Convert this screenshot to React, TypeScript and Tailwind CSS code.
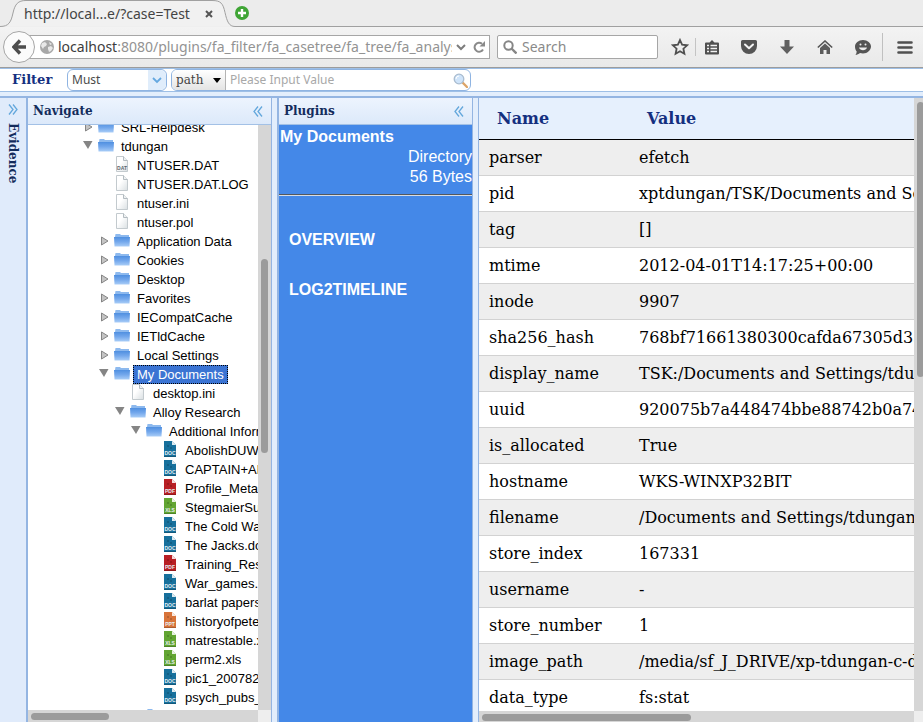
import { useEffect, useRef } from 'react';
import type { ReactNode } from 'react';

type NodeKind = 'closed' | 'open' | 'file' | 'dat' | 'doc' | 'pdf' | 'xls' | 'ppt';

const nodes: { label: string; kind: NodeKind; depth: number; selected?: boolean }[] = [
  { label: 'SRL-Helpdesk', kind: 'closed', depth: 3 },
  { label: 'tdungan', kind: 'open', depth: 3 },
  { label: 'NTUSER.DAT', kind: 'dat', depth: 4 },
  { label: 'NTUSER.DAT.LOG', kind: 'file', depth: 4 },
  { label: 'ntuser.ini', kind: 'file', depth: 4 },
  { label: 'ntuser.pol', kind: 'file', depth: 4 },
  { label: 'Application Data', kind: 'closed', depth: 4 },
  { label: 'Cookies', kind: 'closed', depth: 4 },
  { label: 'Desktop', kind: 'closed', depth: 4 },
  { label: 'Favorites', kind: 'closed', depth: 4 },
  { label: 'IECompatCache', kind: 'closed', depth: 4 },
  { label: 'IETldCache', kind: 'closed', depth: 4 },
  { label: 'Local Settings', kind: 'closed', depth: 4 },
  { label: 'My Documents', kind: 'open', depth: 4, selected: true },
  { label: 'desktop.ini', kind: 'file', depth: 5 },
  { label: 'Alloy Research', kind: 'open', depth: 5 },
  { label: 'Additional Information', kind: 'open', depth: 6 },
  { label: 'AbolishDUW.doc', kind: 'doc', depth: 7 },
  { label: 'CAPTAIN+AMERICA.doc', kind: 'doc', depth: 7 },
  { label: 'Profile_Metals.pdf', kind: 'pdf', depth: 7 },
  { label: 'StegmaierSummary.xls', kind: 'xls', depth: 7 },
  { label: 'The Cold War.doc', kind: 'doc', depth: 7 },
  { label: 'The Jacks.doc', kind: 'doc', depth: 7 },
  { label: 'Training_Results.pdf', kind: 'pdf', depth: 7 },
  { label: 'War_games.doc', kind: 'doc', depth: 7 },
  { label: 'barlat papers.doc', kind: 'doc', depth: 7 },
  { label: 'historyofpeter.ppt', kind: 'ppt', depth: 7 },
  { label: 'matrestable.xls', kind: 'xls', depth: 7 },
  { label: 'perm2.xls', kind: 'xls', depth: 7 },
  { label: 'pic1_200782.doc', kind: 'doc', depth: 7 },
  { label: 'psych_pubs_list.doc', kind: 'doc', depth: 7 },
  { label: 'Archive', kind: 'closed', depth: 6 },
];

const attributes = [
  ['parser', 'efetch'],
  ['pid', 'xptdungan/TSK/Documents and Settings/tdungan/My Documents'],
  ['tag', '[]'],
  ['mtime', '2012-04-01T14:17:25+00:00'],
  ['inode', '9907'],
  ['sha256_hash', '768bf71661380300cafda67305d33a1e9f0c27b4'],
  ['display_name', 'TSK:/Documents and Settings/tdungan/My Documents'],
  ['uuid', '920075b7a448474bbe88742b0a74e1c6'],
  ['is_allocated', 'True'],
  ['hostname', 'WKS-WINXP32BIT'],
  ['filename', '/Documents and Settings/tdungan/My Documents'],
  ['store_index', '167331'],
  ['username', '-'],
  ['store_number', '1'],
  ['image_path', '/media/sf_J_DRIVE/xp-tdungan-c-drive/xp-tdungan-c-drive.E01'],
  ['data_type', 'fs:stat'],
];

const fileColors: Record<string, string> = {
  doc: '#17709c',
  pdf: '#b81f24',
  xls: '#62a532',
  ppt: '#d8743a',
};

function FolderIcon() {
  return (
    <svg width="16" height="16" viewBox="0 0 16 16">
      <defs>
        <linearGradient id="folder" x1="0" y1="0" x2="0" y2="1">
          <stop offset="0" stopColor="#4f8fe0" />
          <stop offset="0.5" stopColor="#74a8ec" />
          <stop offset="1" stopColor="#a9cdf7" />
        </linearGradient>
      </defs>
      <path d="M1 5l.5-3H6l1 1h8v3H1z" fill="#8db9ee" />
      <path d="M0 5h16l-.5 9.500H.5z" fill="url(#folder)" />
    </svg>
  );
}

function FileIcon({ kind }: { kind: NodeKind }) {
  const color = fileColors[kind];
  if (color) {
    return (
      <svg width="12" height="16" viewBox="0 0 12 16">
        <path d="M0 0h8l4 4v12H0z" fill={color} />
        <path d="M8 0v4h4z" fill="#ffffff" opacity="0.85" />
        <path d="M3 4h2v2H3zM6 6h2v2H6z" fill="#000000" opacity="0.15" />
        <path d="M0 15h12v1H0z" fill="#000000" opacity="0.2" />
        <text x="6" y="14" textAnchor="middle" fontSize="5" fontWeight="bold" fill="#e6eef2" fontFamily="Liberation Sans, sans-serif">
          {kind.toUpperCase()}
        </text>
      </svg>
    );
  }
  return (
    <svg width="12" height="16" viewBox="0 0 12 16">
      <defs>
        <linearGradient id="paper" x1="0" y1="0" x2="1" y2="1">
          <stop offset="0.4" stopColor="#ffffff" />
          <stop offset="1" stopColor="#d9dfe2" />
        </linearGradient>
      </defs>
      <path d="M.5.5h7l4 4v11H.5z" fill="url(#paper)" stroke="#c3cace" />
      <path d="M7.500.5v4h4" fill="#eef1f2" stroke="#b3bbc0" />
      {kind === 'dat' && (
        <text x="6" y="14" textAnchor="middle" fontSize="5" fontWeight="bold" fill="#5b666c" fontFamily="Liberation Sans, sans-serif">
          DAT
        </text>
      )}
    </svg>
  );
}

function Twisty({ kind }: { kind: NodeKind }) {
  if (kind === 'open') {
    return (
      <svg width="12" height="16" viewBox="0 0 12 16">
        <path d="M1 4h9.500L6 12z" fill="#858585" />
      </svg>
    );
  }
  if (kind === 'closed') {
    return (
      <svg width="12" height="16" viewBox="0 0 12 16">
        <path d="M3.500 5v8L10 9z" fill="#c4c4c4" stroke="#858585" />
      </svg>
    );
  }
  return null;
}

function Chevrons({ flip = false }: { flip?: boolean }) {
  return (
    <svg width="10" height="11" viewBox="0 0 10 11" className={flip ? 'rotate-180' : ''}>
      <path d="M5 .5l-4 5 4 5M9 .5l-4 5 4 5" fill="none" stroke="#63a7dc" strokeWidth="1.3" />
    </svg>
  );
}

function PanelHeader({ title }: { title: string }) {
  return (
    <div className="flex h-[27px] shrink-0 items-center justify-between border-b border-[#a3c1e6] bg-linear-to-b from-[#edf4fe] to-[#dce9fa] pr-2 pl-[5px]">
      <h2 className="font-['DejaVu_Serif',serif] text-xs font-bold text-[#132c5c]">{title}</h2>
      <button type="button" aria-label={`Collapse ${title}`}>
        <Chevrons />
      </button>
    </div>
  );
}

function ToolbarButton({ label, children }: { label: string; children: ReactNode }) {
  return (
    <button type="button" aria-label={label} className="flex w-[38px] items-center justify-center text-[#555555]">
      {children}
    </button>
  );
}

function BrowserChrome() {
  return (
    <header className="shrink-0 bg-[#ececec] font-['Noto_Sans',sans-serif]">
      <div className="flex h-[27px] items-stretch">
        <div className="relative flex w-[235px] items-center">
          <svg className="absolute inset-0" width="235" height="27" viewBox="0 0 235 27">
            <path d="M0 26.500C9 26.500 11 22 13 13 15 4 18 .5 26 .5H212c9 0 11 3 13 12 2 9 4 14 10 14" fill="#f1f1f1" stroke="#a0a0a0" />
          </svg>
          <span className="relative pl-6 text-sm text-[#444444]">http://local...e/?case=Test</span>
          <button type="button" aria-label="Close tab" className="relative mr-[22px] ml-auto">
            <svg width="8" height="8" viewBox="0 0 8 8">
              <path d="M1 1l6 6M7 1L1 7" stroke="#555555" strokeWidth="2" />
            </svg>
          </button>
        </div>
        <div className="flex grow items-center border-b border-[#a0a0a0]">
          <button type="button" aria-label="New tab">
            <svg width="14" height="14" viewBox="0 0 14 14">
              <circle cx="7" cy="7" r="7" fill="#3fa535" />
              <path d="M7 3v8M3 7h8" stroke="#ffffff" strokeWidth="2.400" />
            </svg>
          </button>
        </div>
      </div>
      <div className="flex h-[41px] items-center border-b border-[#9c9c9c] bg-linear-to-b from-[#f3f3f3] to-[#e9e9e9] pl-[3px]">
        <button type="button" aria-label="Back" className="z-10 flex size-8 shrink-0 items-center justify-center rounded-full border border-[#a6a6a6] bg-[#fbfbfb]">
          <svg width="15" height="16" viewBox="0 0 15 16">
            <path d="M8 1.500L1.800 8 8 14.500M2 8h12" fill="none" stroke="#4d4d4d" strokeWidth="3.400" />
          </svg>
        </button>
        <div className="-ml-2 flex h-6 w-[463px] shrink-0 items-center border border-[#a6a6a6] bg-white pr-1 pl-3">
          <svg width="14" height="14" viewBox="0 0 14 14" className="shrink-0">
            <circle cx="7" cy="7" r="7" fill="#a8a8a8" />
            <path d="M2 3l3-1 2 2-1 2-2 1-1 2-2-3zM8 7l3-1 2 2-2 3-2 1-1-3zM9 2l3 2-2 1z" fill="#e8e8e8" />
          </svg>
          <a href="#location" className="ml-1 min-w-0 grow overflow-hidden text-sm whitespace-nowrap text-[#939393]">
            <span className="text-[#3c3c3c]">localhost</span>:8080/plugins/fa_filter/fa_casetree/fa_tree/fa_analysis
          </a>
          <button type="button" aria-label="Show history" className="ml-1">
            <svg width="10" height="7" viewBox="0 0 10 7">
              <path d="M1 1l4 4 4-4" fill="none" stroke="#7d7d7d" strokeWidth="2" />
            </svg>
          </button>
          <button type="button" aria-label="Reload" className="ml-[7px]">
            <svg width="12" height="12" viewBox="0 0 12 12">
              <path d="M9 2.800A4.500 4.500 0 1 0 10 8.500" fill="none" stroke="#8a8a8a" strokeWidth="2" />
              <path d="M6.500 5.500H12V0z" fill="#8a8a8a" />
            </svg>
          </button>
        </div>
        <label className="ml-[7px] flex h-6 min-w-0 grow items-center rounded-xs border border-[#a6a6a6] bg-white pl-[5px]">
          <svg width="14" height="14" viewBox="0 0 14 14" className="shrink-0">
            <circle cx="5.500" cy="5.500" r="4.200" fill="none" stroke="#868686" strokeWidth="2" />
            <path d="M8.500 8.500l5 5" stroke="#868686" strokeWidth="2.400" />
          </svg>
          <input aria-label="Search the web" placeholder="Search" className="ml-[5px] w-full min-w-0 text-sm outline-none placeholder:text-[#8a8a8a]" />
        </label>
        <div className="flex h-full shrink-0 items-center pl-[9px]">
          <button type="button" aria-label="Bookmark this page" className="flex w-[26px] justify-center">
            <svg width="18" height="18" viewBox="0 0 18 18">
              <path d="M9 2l2.100 4.700 5 .6-3.700 3.400 1 5L9 13.200l-4.400 2.500 1-5L1.900 7.300l5-.6z" fill="none" stroke="#505050" strokeWidth="1.800" />
            </svg>
          </button>
          <span className="ml-[2px] h-[18px] w-px bg-[#c4c4c4]" />
          <button type="button" aria-label="Bookmarks" className="flex w-[31px] justify-center">
            <svg width="14" height="15" viewBox="0 0 14 15">
              <path d="M1 2.500h3.500L7 0l2.500 2.500H13a1 1 0 0 1 1 1V13.500a1 1 0 0 1-1 1H1a1 1 0 0 1-1-1V3.500a1 1 0 0 1 1-1z" fill="#505050" />
              <path d="M2 5.500h2M2 8.500h2M2 11.500h2M5.500 5.500H12M5.500 8.500H12M5.500 11.500H12" stroke="#f2f2f2" strokeWidth="1.600" />
            </svg>
          </button>
          <span className="w-[3px]" />
          <ToolbarButton label="Pocket">
            <svg width="16" height="14" viewBox="0 0 16 14">
              <path d="M1.500 0h13A1.500 1.500 0 0 1 16 1.500V6a8 8 0 0 1-16 0V1.500A1.500 1.500 0 0 1 1.500 0z" fill="#555555" />
              <path d="M4 4.500L8 8.300l4-3.800" fill="none" stroke="#f4f4f4" strokeWidth="2" strokeLinecap="round" strokeLinejoin="round" />
            </svg>
          </ToolbarButton>
          <ToolbarButton label="Downloads">
            <svg width="14" height="14" viewBox="0 0 14 14">
              <path d="M4.500 0h5v6.500H14L7 14 0 6.500h4.500z" fill="#606060" />
            </svg>
          </ToolbarButton>
          <ToolbarButton label="Home">
            <svg width="16" height="14" viewBox="0 0 16 14">
              <path d="M.8 7.500L8 1l7.200 6.500" fill="none" stroke="#555555" strokeWidth="1.600" />
              <path d="M8 3.500L13 8v6H9.500v-4h-3v4H3V8z" fill="#5c5c5c" />
            </svg>
          </ToolbarButton>
          <ToolbarButton label="Hello">
            <svg width="16" height="15" viewBox="0 0 16 15">
              <path d="M8 0c4.500 0 8 3 8 6.500S12.500 13.500 8 13.500c-1 0-2-.2-3-.5-1.200 1-3 1.800-4.500 2 .8-1 1.200-2.200 1.200-3.500C.6 10.200 0 8.400 0 6.500 0 3 3.500 0 8 0z" fill="#555555" />
              <path d="M4 7.500c1 3.500 7 3.500 8 0z" fill="#eeeeee" />
              <circle cx="5.500" cy="4.500" r="1" fill="#eeeeee" />
              <circle cx="10.500" cy="4.500" r="1" fill="#eeeeee" />
            </svg>
          </ToolbarButton>
          <span className="h-7 w-px bg-[#c0c0c0]" />
          <button type="button" aria-label="Menu" className="flex w-10 justify-center pl-[3px]">
            <svg width="16" height="13" viewBox="0 0 16 13">
              <path d="M1.500 1.500h13M1.500 6.500h13M1.500 11.500h13" stroke="#505050" strokeWidth="2.600" strokeLinecap="round" />
            </svg>
          </button>
        </div>
      </div>
    </header>
  );
}

function FilterBar() {
  return (
    <form className="flex h-6 shrink-0 items-center border-y border-[#9ebfe6] bg-white font-['Noto_Sans',sans-serif]">
      <h1 className="w-[67px] pl-3 font-['DejaVu_Serif',serif] text-[13px] font-bold text-[#142f80]">Filter</h1>
      <div className="relative flex h-[22px] w-[100px]">
        <select aria-label="Condition" defaultValue="must" className="w-full appearance-none rounded-md border border-[#8fb4e2] bg-white pl-1 text-xs text-[#4a4a4a]">
          <option value="must">Must</option>
          <option value="not">Must Not</option>
        </select>
        <span className="pointer-events-none absolute inset-y-px right-px flex w-[18px] items-center justify-center rounded-r-md bg-[#e0edfb]">
          <svg width="10" height="7" viewBox="0 0 10 7">
            <path d="M1 1l4 4 4-4" fill="none" stroke="#64a8e0" strokeWidth="1.800" />
          </svg>
        </span>
      </div>
      <div className="ml-1 flex h-[22px] w-[300px] overflow-hidden rounded-md border border-[#8fb4e2]">
        <div className="relative flex w-[54px] border-r border-[#b4b4b4]">
          <select aria-label="Field" className="w-full appearance-none bg-linear-to-b from-white to-[#e4e4e4] pl-1 font-['DejaVu_Serif',serif] text-xs text-[#444444]">
            <option>path</option>
            <option>name</option>
          </select>
          <svg width="8" height="5" viewBox="0 0 8 5" className="pointer-events-none absolute top-2 right-1">
            <path d="M0 0h8L4 5z" fill="#000000" />
          </svg>
        </div>
        <input aria-label="Filter value" placeholder="Please Input Value" className="min-w-0 grow bg-white px-1 text-xs outline-none placeholder:text-[#a8a8a8]" />
        <button type="submit" aria-label="Apply filter" className="px-[2px]">
          <svg width="15" height="15" viewBox="0 0 15 15">
            <path d="M9 9l5 5" stroke="#dca468" strokeWidth="2.400" strokeLinecap="round" />
            <circle cx="6" cy="6" r="4.800" fill="#cfe4fa" stroke="#a9bccf" strokeWidth="1.300" />
            <path d="M3 6a3 3 0 0 1 3-3" stroke="#ffffff" fill="none" />
          </svg>
        </button>
      </div>
    </form>
  );
}

function NavigatePanel() {
  const scroller = useRef<HTMLDivElement>(null);

  useEffect(() => {
    if (scroller.current) scroller.current.scrollTop = 7;
  }, []);

  return (
    <section className="flex w-[246px] shrink-0 flex-col border-r border-l-2 border-[#94b5e2]">
      <PanelHeader title="Navigate" />
      <div className="flex min-h-0 grow bg-white">
        <div ref={scroller} className="min-w-0 grow overflow-hidden">
          <ul className="font-['Liberation_Sans',Arial,sans-serif] text-[13px] text-black">
            {nodes.map((node) => (
              <li key={node.label} className="flex h-[19px] items-start whitespace-nowrap" style={{ paddingLeft: 6 + node.depth * 16 }}>
                <span className="flex w-4 shrink-0">
                  <Twisty kind={node.kind} />
                </span>
                <span className="flex w-4 shrink-0 justify-center">
                  {node.kind === 'open' || node.kind === 'closed' ? <FolderIcon /> : <FileIcon kind={node.kind} />}
                </span>
                <span
                  className={
                    node.selected
                      ? 'ml-[3px] border border-dotted border-black bg-[#3b74d3] px-[3px] leading-[17px] text-white'
                      : 'ml-[3px] border border-transparent px-[3px] leading-[17px]'
                  }
                >
                  {node.label}
                </span>
              </li>
            ))}
          </ul>
        </div>
        <div className="w-[13px] shrink-0 bg-[#d6d6d6] pt-[134px] pl-[3px]">
          <div className="h-[194px] w-[7px] rounded-full bg-[#9b9b9b]" />
        </div>
      </div>
      <div className="flex h-3 shrink-0 bg-[#d6d6d6]">
        <div className="grow pt-[3px] pl-[3px]">
          <div className="h-[7px] w-[78px] rounded-full bg-[#9b9b9b]" />
        </div>
        <div className="w-[13px] bg-[#eeeeee]" />
      </div>
    </section>
  );
}

function PluginsPanel() {
  return (
    <section className="ml-[5px] flex w-[196px] shrink-0 flex-col border-r border-l-2 border-[#94b5e2]">
      <PanelHeader title="Plugins" />
      <div className="grow bg-[#4488e8] font-['Liberation_Sans',Arial,sans-serif] text-base leading-5 text-white">
        <div className="border-b border-[#54585e] pt-[2px] pb-[7px] pl-px">
          <p className="font-bold">My Documents</p>
          <p className="text-right">Directory</p>
          <p className="text-right">56 Bytes</p>
        </div>
        <nav className="flex flex-col gap-[30px] border-t border-[#d8dde4] pt-[34px] pl-[10px] font-bold">
          <a href="#overview">OVERVIEW</a>
          <a href="#log2timeline">LOG2TIMELINE</a>
        </nav>
      </div>
    </section>
  );
}

function DetailPanel() {
  return (
    <section className="ml-[5px] flex min-w-0 grow flex-col border-l border-[#94b5e2]">
      <div className="flex min-h-0 grow">
        <div className="min-w-0 grow overflow-hidden bg-white">
          <table className="w-[720px] table-fixed border-collapse font-['DejaVu_Serif',serif] text-base whitespace-nowrap text-black">
            <thead>
              <tr className="h-[41px] border-b border-black bg-[#e6f0fd] text-left text-[#142f80]">
                <th className="w-[150px] pt-px pl-[18px]">Name</th>
                <th className="pt-px pl-[18px]">Value</th>
              </tr>
            </thead>
            <tbody>
              {attributes.map(([name, value]) => (
                <tr key={name} className="h-9 border-b border-[#d2d2d2] odd:bg-[#eeeeee]">
                  <td className="pt-px pl-[10px]">{name}</td>
                  <td className="pt-px pl-[10px]">{value}</td>
                </tr>
              ))}
            </tbody>
          </table>
        </div>
        <div className="w-[9px] shrink-0 overflow-hidden bg-[#d6d6d6] pt-1 pl-[3px]">
          <div className="h-[275px] w-[7px] rounded-full bg-[#9b9b9b]" />
        </div>
      </div>
      <div className="flex h-[11px] shrink-0 bg-[#d6d6d6]">
        <div className="grow pt-[3px] pl-[3px]">
          <div className="h-[7px] w-[209px] rounded-full bg-[#9b9b9b]" />
        </div>
        <div className="w-[9px] bg-[#eeeeee]" />
      </div>
    </section>
  );
}

export default function App() {
  return (
    <div className="flex h-screen flex-col overflow-hidden bg-[#e3eefc]">
      <BrowserChrome />
      <FilterBar />
      <main className="mt-1 flex min-h-0 grow border-t-2 border-[#94b5e2]">
        <aside className="flex w-[26px] shrink-0 flex-col items-center gap-2 bg-[#e0ebfb] pt-[6px]">
          <button type="button" aria-label="Expand Evidence">
            <Chevrons flip />
          </button>
          <h2 className="font-['DejaVu_Serif',serif] text-xs font-bold text-[#132c5c] [writing-mode:vertical-rl]">Evidence</h2>
        </aside>
        <NavigatePanel />
        <PluginsPanel />
        <DetailPanel />
      </main>
    </div>
  );
}
